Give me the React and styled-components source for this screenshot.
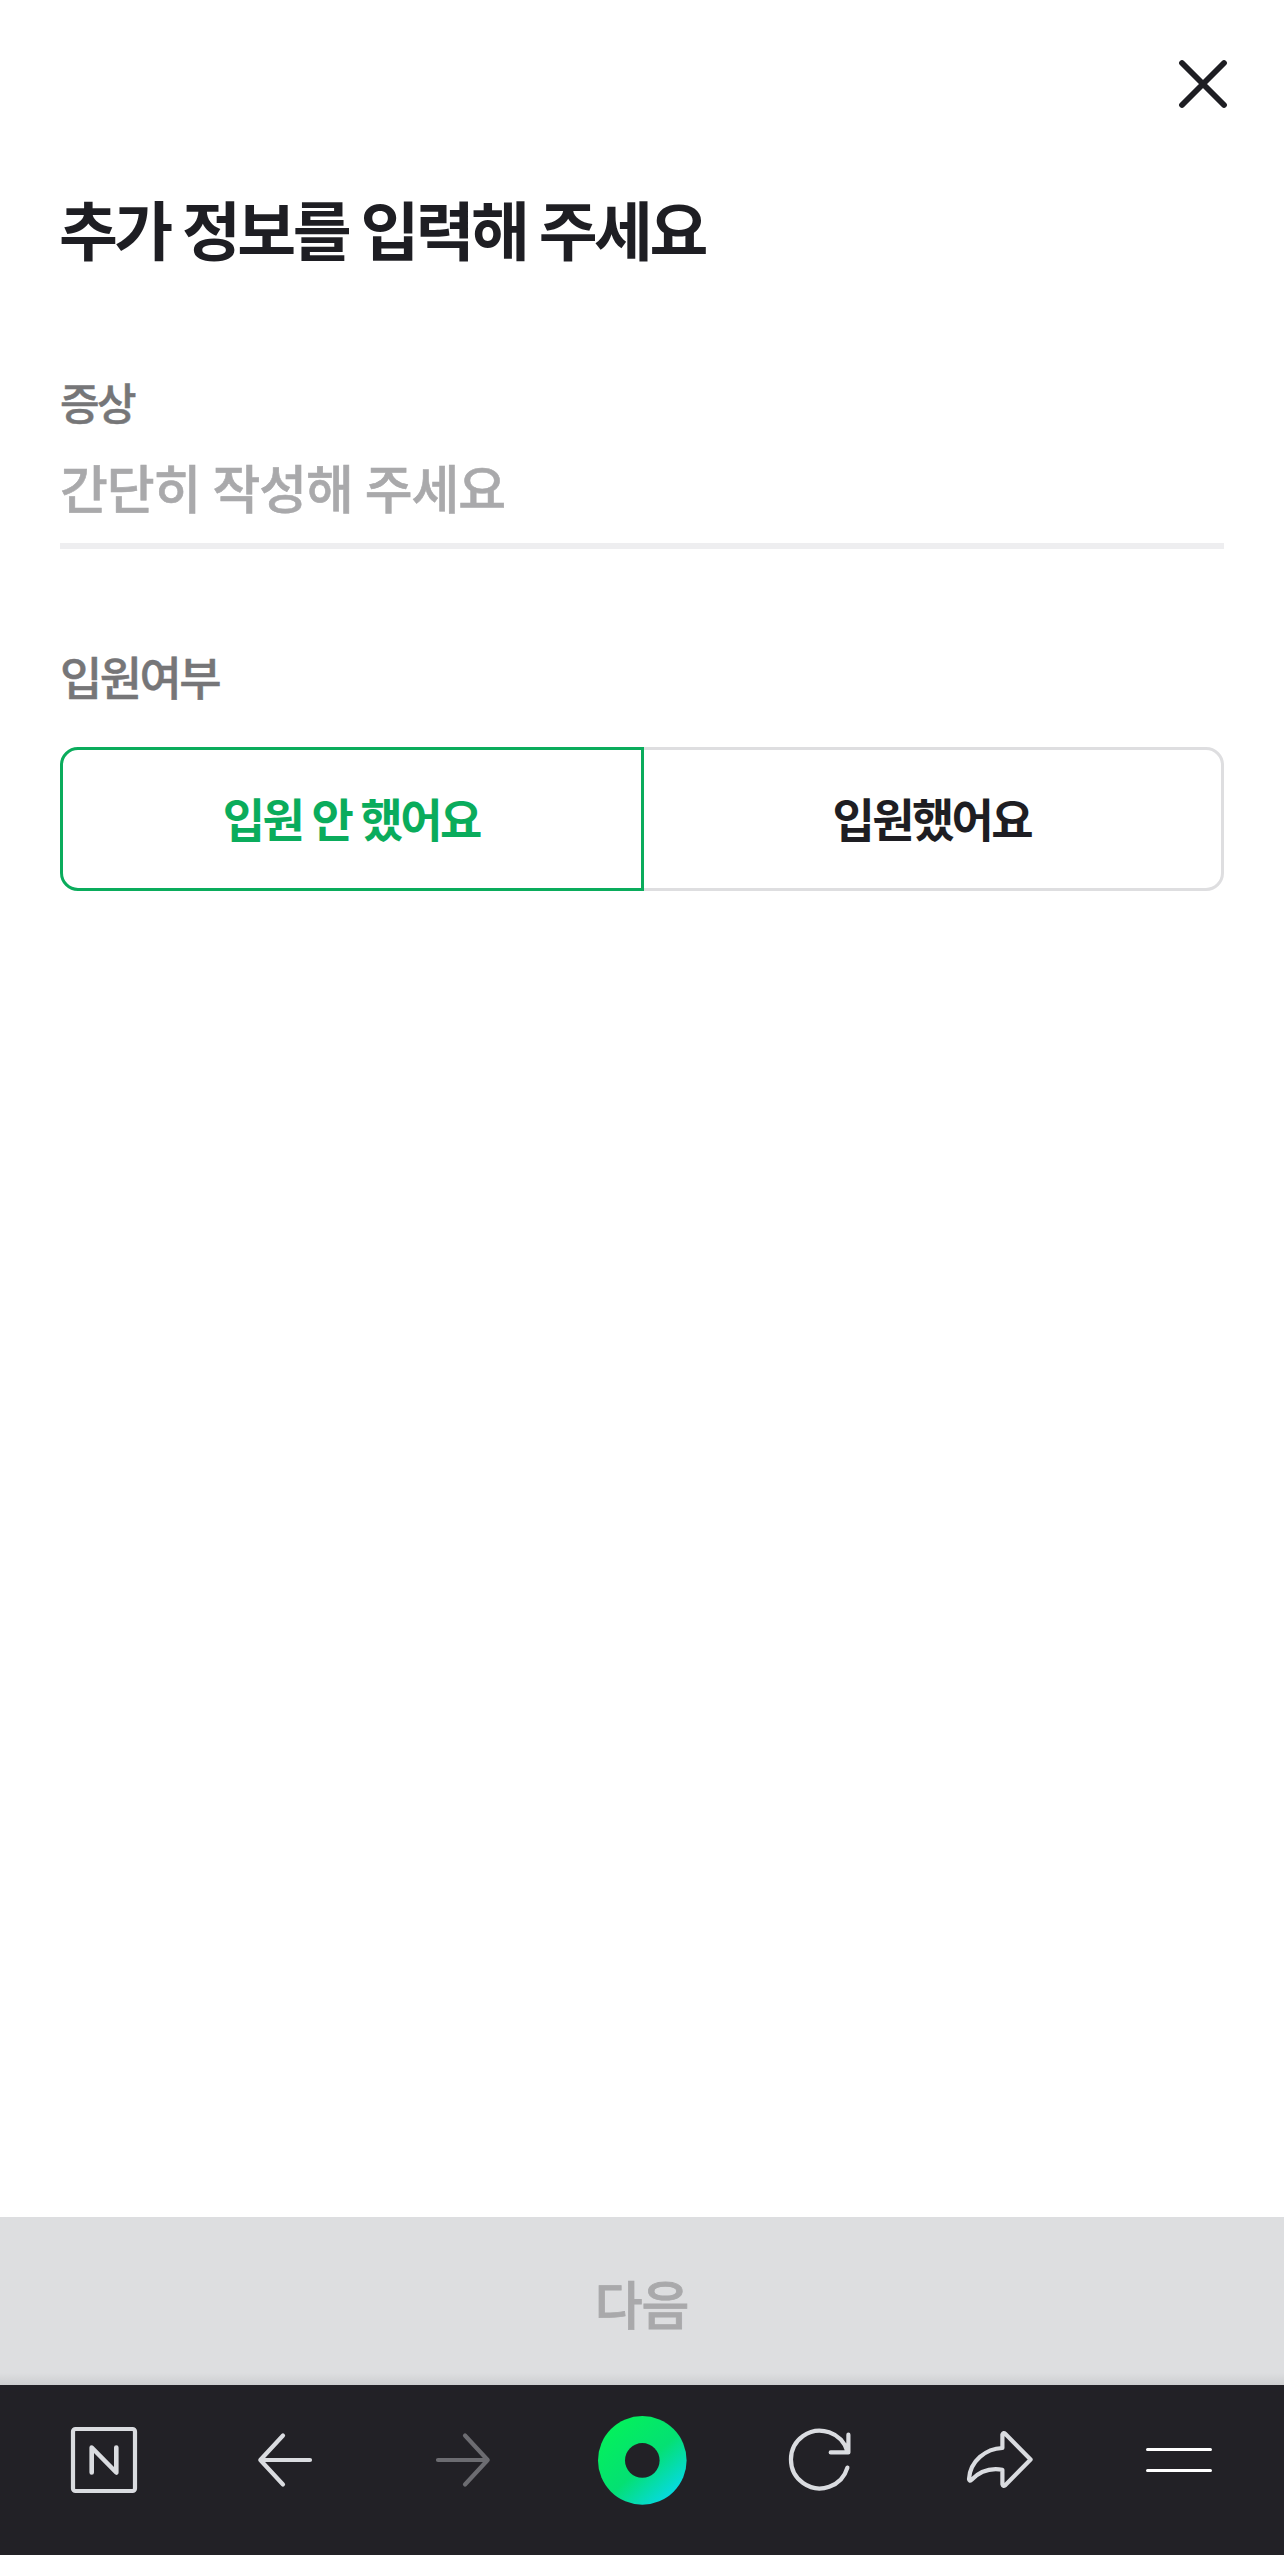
import React, { useState } from "react";
import styled, { createGlobalStyle } from "styled-components";

const GlobalStyle = createGlobalStyle`
  * {
    box-sizing: border-box;
  }

  body {
    margin: 0;
    background: #fff;
    color: #1e1e23;
    font-family: "Noto Sans CJK KR", sans-serif;
  }

  button, input {
    font-family: inherit;
    border: 0;
    padding: 0;
    margin: 0;
    background: none;
  }
`

const Page = styled.div`
  display: flex;
  flex-direction: column;
  height: 2555px;
`

const Header = styled.header`
  display: flex;
  justify-content: flex-end;
  padding: 54px 51px 0 0;
`

const CloseButton = styled.button`
  width: 60px;
  height: 60px;

  svg {
    display: block;
  }
`

const Main = styled.main`
  flex: 1;
  padding: 63px 60px 0;
`

const Title = styled.h1`
  margin: 0 0 0 -1px;
  font-size: 64px;
  font-weight: 700;
  line-height: 100px;
  letter-spacing: -3.6px;
  word-spacing: 1.6px;
  white-space: nowrap;
`

const Field = styled.div`
  display: flex;
  flex-direction: column;
  padding-top: ${props => props.$space}px;
`

const Label = styled.label`
  color: #767678;
  font-size: ${props => props.$small ? 43 : 46}px;
  font-weight: 500;
  line-height: 66px;
  letter-spacing: -2.6px;
  -webkit-text-stroke: 0.5px;
`

const TextInput = styled.input`
  height: 115px;
  padding-bottom: 5px;
  border-bottom: 6px solid #eeeef0;
  outline: 0;
  color: #1e1e23;
  font-size: 52px;
  font-weight: 500;
  letter-spacing: -1.1px;
  word-spacing: 1.6px;

  &::placeholder {
    color: #a9a9ab;
    opacity: 1;
    -webkit-text-stroke: 0.6px;
  }
`

const Options = styled.div`
  display: flex;
  height: 144px;
  margin-top: 39px;
`

const Option = styled.button`
  flex: 1;
  padding: 0 1px 5px 0;
  border: 3px solid ${props => props.$selected ? "#0aac5c" : "#dedee0"};
  color: ${props => props.$selected ? "#0aac5c" : "#1e1e23"};
  font-size: 46px;
  font-weight: 700;
  letter-spacing: -2.6px;
  word-spacing: 1.5px;
  z-index: ${props => props.$selected ? 1 : 0};

  &:first-child {
    border-radius: 18px 0 0 18px;
  }

  &:last-child {
    margin-left: -3px;
    border-radius: 0 18px 18px 0;
  }
`

const NextButton = styled.button`
  height: 168px;
  padding: 3px 1px 0 0;
  background: linear-gradient(#dddee0 0, #dddee0 156px, #cdced0 168px);
  color: #a9a9ab;
  font-size: 52px;
  font-weight: 500;
  letter-spacing: -1px;
  -webkit-text-stroke: 0.8px;
`

const BottomBar = styled.nav`
  display: flex;
  gap: 83px;
  height: 170px;
  padding: 27px 0 0 56px;
  background: #222126;
`

const BarButton = styled.button`
  width: 96px;
  height: 96px;
  color: ${props => props.disabled ? "#6c6c71" : "#dadce0"};
`

const BarIcon = styled.svg`
  display: block;
  width: 96px;
  height: 96px;
  fill: none;
  stroke: currentColor;
  stroke-width: 4.2;
  stroke-linecap: round;
  stroke-linejoin: round;
`

const barItems = [
  {
    name: "Home",
    icon: (
      <>
        <rect x="17" y="17" width="62" height="62" rx="2.5" />
        <path strokeWidth="4.6" d="M35.7 60.5V35.5L60.3 60.5V35.5" />
      </>
    )
  },
  { name: "Back", icon: <path d="M48 23.5L25.3 48L48 72.5M25.3 48H75" /> },
  { name: "Forward", disabled: true, icon: <path d="M51 23.5L73.7 48L51 72.5M73.7 48H24" /> },
  {
    name: "Green dot",
    icon: (
      <>
        <defs>
          <linearGradient id="dot" x1="0.2" y1="0.08" x2="0.88" y2="0.84">
            <stop offset="0" stopColor="#04f05c" />
            <stop offset="0.55" stopColor="#04e073" />
            <stop offset="1" stopColor="#06d9e0" />
          </linearGradient>
        </defs>
        <circle cx="49.3" cy="48.4" r="44.3" fill="url(#dot)" stroke="none" />
        <circle cx="49.3" cy="48.4" r="17.3" fill="#222126" stroke="none" />
      </>
    )
  },
  {
    name: "Reload",
    icon: <path d="M75.4 55.6A28.8 28.8 0 1 1 75.4 39.5M76.4 22.7V40.4H58.7" />
  },
  {
    name: "Share",
    icon: <path d="M51.4 22.5Q52.4 20 54.2 21.8L79.6 47.5L54.2 73.3Q52 74.8 51.4 72.3V57.8C38 55.5 28.5 59.5 20.3 68Q18.3 69.8 18 67C19 49 35 36.5 51.4 36Z" />
  },
  {
    name: "Menu",
    icon: <path stroke="#fff" strokeWidth="3" d="M17.5 37.5H80.5M17.5 58.5H80.5" />
  }
]

const App = () => {
  const [admitted, setAdmitted] = useState(false)

  return (
    <>
      <GlobalStyle />
      <Page>
        <Header>
          <CloseButton aria-label="Close">
            <svg width="60" height="60" stroke="#1e1e23" strokeWidth="5.8" strokeLinecap="round">
              <path d="M9 9L51 51M51 9L9 51" />
            </svg>
          </CloseButton>
        </Header>
        <Main>
          <Title>추가 정보를 입력해 주세요</Title>
          <Field $space={91}>
            <Label $small htmlFor="symptom">증상</Label>
            <TextInput id="symptom" placeholder="간단히 작성해 주세요" />
          </Field>
          <Field $space={93}>
            <Label as="span">입원여부</Label>
            <Options>
              <Option $selected={!admitted} onClick={() => setAdmitted(false)}>입원 안 했어요</Option>
              <Option $selected={admitted} onClick={() => setAdmitted(true)}>입원했어요</Option>
            </Options>
          </Field>
        </Main>
        <NextButton>다음</NextButton>
        <BottomBar>
          {barItems.map(item => (
            <BarButton key={item.name} aria-label={item.name} disabled={item.disabled}>
              <BarIcon viewBox="0 0 96 96">{item.icon}</BarIcon>
            </BarButton>
          ))}
        </BottomBar>
      </Page>
    </>
  )
}

export default App
